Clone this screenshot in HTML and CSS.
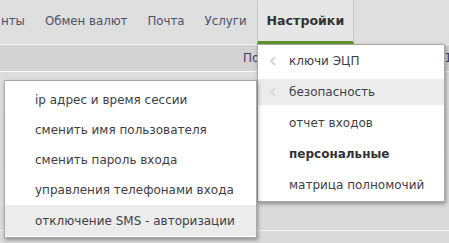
FILE: index.html
```html
<!DOCTYPE html>
<html lang="ru">
<head>
<meta charset="utf-8">
<link rel="stylesheet" href="styles.css">
</head>
<body>
<div class="page">
  <nav class="topnav">
    <a class="nav-item first">нты</a>
    <a class="nav-item">Обмен валют</a>
    <a class="nav-item">Почта</a>
    <a class="nav-item">Услуги</a>
    <a class="nav-item active">Настройки</a>
  </nav>
  <div class="subbar"><span class="subbar-text">По</span><span class="subbar-right">I</span></div>
  <div class="content">
    <div class="row-line"></div>
  </div>

  <ul class="menu menu-main">
    <li class="item has-sub"><svg class="chev" width="8" height="10" viewBox="0 0 8 10"><polyline points="6,1 2,5 6,9" fill="none" stroke="#d2d2d2" stroke-width="2"/></svg>ключи ЭЦП</li>
    <li class="item has-sub hover"><svg class="chev" width="8" height="10" viewBox="0 0 8 10"><polyline points="6,1 2,5 6,9" fill="none" stroke="#dadada" stroke-width="2"/></svg>безопасность</li>
    <li class="item">отчет входов</li>
    <li class="item bold">персональные</li>
    <li class="item">матрица полномочий</li>
  </ul>

  <ul class="menu menu-sub">
    <li class="item">ip адрес и время сессии</li>
    <li class="item">сменить имя пользователя</li>
    <li class="item">сменить пароль входа</li>
    <li class="item">управления телефонами входа</li>
    <li class="item hover">отключение SMS - авторизации</li>
  </ul>
</div>
</body>
</html>
```

FILE: styles.css
```css
html, body {
  margin: 0;
  padding: 0;
}
body {
  background: #dedede;
  font-family: "DejaVu Sans", Tahoma, sans-serif;
  font-size: 12px;
  overflow: hidden;
}
.page {
  position: relative;
  width: 449px;
  height: 243px;
  background: linear-gradient(180deg, #dfdfdf, #dadada);
}
.topnav {
  display: flex;
  height: 41px;
  border-bottom: 3px solid transparent;
  align-items: stretch;
  margin-left: -9px;
}
.nav-item {
  display: flex;
  align-items: center;
  padding: 0 10px;
  color: #4c5268;
  font-family: "DejaVu Sans Condensed", "DejaVu Sans", sans-serif;
  font-stretch: condensed;
  font-size: 13.1px;
  height: 41px;
}
.nav-item.active {
  background: #e6e6e6;
  color: #333;
  font-family: "DejaVu Sans", sans-serif;
  font-stretch: normal;
  font-weight: bold;
  font-size: 12.6px;
  border-bottom: 3px solid #5c9528;
  border-left: 1px solid #c8c8c8;
  border-right: 1px solid #c8c8c8;
  padding: 0 9px;
}
.subbar {
  height: 26px;
  background: #d3d3d3;
  border-top: 1px solid #f2f2f2;
  border-bottom: 1px solid #f6f6f6;
  display: flex;
  align-items: center;
  justify-content: space-between;
  padding-left: 243px;
  color: #453a6e;
  font-size: 12px;
  white-space: nowrap;
  overflow: hidden;
}
.subbar-right {
  font-family: "DejaVu Sans Mono", monospace;
  margin-right: -3px;
}
.content {
  padding-top: 158px;
}
.row-line {
  border-top: 1px solid #f4f4f4;
}
.menu {
  position: absolute;
  margin: 0;
  list-style: none;
  background: #fff;
  border: 1px solid #a9a9a9;
  box-shadow: 1px 2px 4px rgba(0, 0, 0, 0.35);
  color: #3e3e48;
  font-size: 12px;
}
.menu-main {
  left: 257px;
  top: 44px;
  width: 186px;
  padding: 3px 0;
  display: flex;
  flex-direction: column;
  gap: 5px;
}
.menu-main .item {
  height: 26px;
  display: flex;
  align-items: center;
  padding-left: 31px;
  position: relative;
}
.menu-main .chev {
  position: absolute;
  left: 11px;
  top: 8px;
}
.menu-sub {
  left: 4px;
  top: 80px;
  width: 251px;
  padding: 4px 0 1px;
}
.menu-sub .item {
  height: 30px;
  display: flex;
  align-items: center;
  padding-left: 30px;
  white-space: nowrap;
}
.menu-sub .item:last-child {
  height: 31px;
}
.item.hover {
  background: #ececec;
}
.item.bold {
  font-weight: bold;
  color: #333;
}
```
